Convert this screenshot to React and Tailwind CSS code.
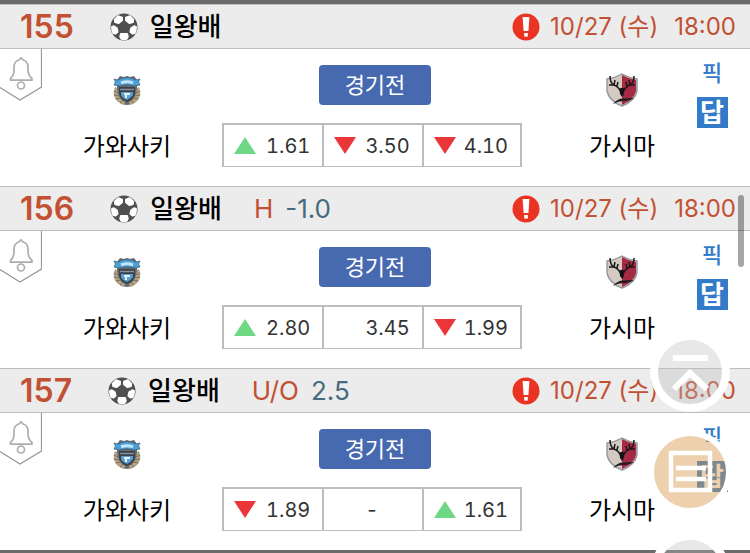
import { clsx } from 'clsx'

const matches = [
  {
    id: 155,
    league: '일왕배',
    home: '가와사키',
    away: '가시마',
    odds: [
      { value: '1.61', trend: 'up' },
      { value: '3.50', trend: 'down' },
      { value: '4.10', trend: 'down' },
    ],
  },
  {
    id: 156,
    league: '일왕배',
    type: 'H',
    line: '-1.0',
    home: '가와사키',
    away: '가시마',
    odds: [
      { value: '2.80', trend: 'up' },
      { value: '3.45' },
      { value: '1.99', trend: 'down' },
    ],
  },
  {
    id: 157,
    league: '일왕배',
    type: 'U/O',
    line: '2.5',
    home: '가와사키',
    away: '가시마',
    odds: [
      { value: '1.89', trend: 'down' },
      { value: '-' },
      { value: '1.61', trend: 'up' },
    ],
  },
]

const SoccerBall = () => (
  <svg viewBox="0 0 28 28" className="size-7 shrink-0" aria-hidden="true">
    <circle cx="14" cy="14" r="13.5" fill="#505050" />
    <g fill="#fff" stroke="#fff" strokeWidth="1.5" strokeLinejoin="round">
      <path d="M8 3 12.200 4.500V7.500L8.500 10.300 5 9.300 4.600 6.500Z" />
      <path d="M20 3 15.800 4.500V7.500L19.500 10.300 23 9.300 23.400 6.500Z" />
      <path d="M1.800 14 3.800 13 7 15.200 7.800 19 5.500 20.800 3.300 20.300Q1.700 17.500 1.800 14Z" />
      <path d="M26.200 14 24.200 13 21 15.200 20.200 19 22.500 20.800 24.700 20.300Q26.300 17.500 26.200 14Z" />
      <path d="M10.800 20.800H17.200L18 23.700 16.800 26Q14 26.800 11.200 26L10 23.700Z" />
    </g>
  </svg>
)

const AlertIcon = () => (
  <svg viewBox="0 0 28 28" className="size-7 shrink-0" aria-hidden="true">
    <circle cx="14" cy="14" r="13.5" fill="#ea3323" />
    <path d="M10.600 4h6.800l-1 14h-4.800Z" fill="#fff" />
    <rect x="12.200" y="20" width="3.600" height="3.600" fill="#fff" />
  </svg>
)

const BellTab = () => (
  <button type="button" aria-label="알림" className="block h-13 w-[42px]">
    <svg viewBox="0 0 42 52" className="block h-13 w-[42px]" fill="none">
      <path d="M41.500 0V38L20 51 0 38.500" stroke="#979797" strokeWidth="1.2" />
      <g stroke="#adadad" strokeWidth="1.7" strokeLinejoin="round">
        <path d="M10.500 31.200H32V29.500C29 27 28 25 28 21V18C28 13.500 25.500 11.500 22.800 10.700L21 8.700 19.200 10.700C16.500 11.500 14 13.500 14 18V21C14 25 13.500 27 10.500 29.500Z" />
        <circle cx="21" cy="36.500" r="3.500" />
      </g>
    </svg>
  </button>
)

const HomeCrest = () => (
  <svg viewBox="0 0 32 32" className="size-8" aria-hidden="true">
    <path d="M6 6 9 2l4 1 3-1 3 1 4-1 3 4v18l-4 6-6 1-6-1-4-6Z" fill="#666a6e" />
    <path d="M4 13Q0 22 7 28L13 31 14 28Q7 25 6 14Z" fill="#b3a283" />
    <path d="M28 13Q32 22 25 28L19 31 18 28Q25 25 26 14Z" fill="#b3a283" />
    <path d="M3 17l4 2M3 21l5 1M5 25l5-1M9 29l3-3M29 17l-4 2M29 21l-5 1M27 25l-5-1M23 29l-3-3" stroke="#6d6350" strokeWidth=".8" />
    <path d="M8 13H24V20Q23 25 16 28 9 25 8 20Z" fill="#38424d" />
    <path d="M10 18H22V21Q20 24 16 26 11 24 10 21Z" fill="#5b9fd0" />
    <path d="M13 19h6v2h-3v3h-2v-3h-1Z" fill="#e8f1f7" />
    <path d="M9 15.500H23" stroke="#8a8f94" strokeWidth="1.5" />
    <path d="M3 5 7 6Q16 1 25 6L29 5 27.500 8 29 11 24 12Q16 9.500 8 12L3 11 4.500 8Z" fill="#4d9fd8" stroke="#42637c" strokeWidth=".8" />
    <path d="M10 8.800Q16 6.500 22 8.800" stroke="#bfe5fb" strokeWidth="3" fill="none" />
  </svg>
)

const AwayCrest = () => (
  <svg viewBox="0 0 34 34" className="size-[34px]" aria-hidden="true">
    <path d="M17 1Q24 5 32 6V18Q30 28 17 33 4 28 2 18V6Q10 5 17 1Z" fill="#d5cac2" stroke="#92979d" strokeWidth="1.4" />
    <path d="M17 2Q24 6 31 7V18Q29 27 17 32Z" fill="#a52b45" />
    <g stroke="#1a1719" fill="none" strokeWidth="1.5">
      <path d="M16 19Q14 14 9 12 5 10 5 3M29 3Q29 10 25 12 20 14 18 19M9 12 10 7M12 13 13 9M25 12 24 7M22 13 21 9M9 12 4 12M25 12 30 12" />
    </g>
    <path d="M14.500 16Q17 13.500 19.500 16L18.500 22 17 24 15 21Z" fill="#151214" />
    <path d="M8 31Q12 26 17 25.500L29 25Q24 28.500 19 28 13 28 8 31Z" fill="#241c20" />
  </svg>
)

const Trend = ({ dir }) => (
  <svg viewBox="0 0 22 17" className="h-[17px] w-[22px]" aria-hidden="true">
    {dir === 'up' ? (
      <path d="M11 0 22 17H0Z" fill="#6fd884" />
    ) : (
      <path d="M0 0H22L11 17Z" fill="#eb3639" />
    )}
  </svg>
)

const Team = ({ crest, name, className }) => (
  <div className={clsx('flex flex-col items-center pt-6', className)}>
    <div className="flex h-[34px] items-center">{crest}</div>
    <span className="mt-[22px] text-2xl leading-9 text-black">{name}</span>
  </div>
)

const OddsTable = ({ odds }) => (
  <table className="h-11 w-full table-fixed border-separate border-spacing-0 border-t-2 border-r border-b border-l border-[#bdbdbd]">
    <tbody>
      <tr>
        {odds.map(({ value, trend }, i) => (
          <td key={i} className={clsx('border-[#bdbdbd] p-0', i === 0 ? 'border-l' : 'border-l-2', i === 2 && 'border-r')}>
            <div
              className={clsx(
                'flex items-center pr-3 pl-2.5 text-xl leading-6 text-[#333] tabular-nums',
                value === '-' ? 'justify-center' : trend ? 'justify-between' : 'justify-end',
              )}
            >
              {trend && <Trend dir={trend} />}
              <span>{value}</span>
            </div>
          </td>
        ))}
      </tr>
    </tbody>
  </table>
)

const Match = ({ match }) => (
  <article>
    <header className="flex h-[45px] items-center border-y border-[#bdbdbd] bg-[#ececec] pr-3.5 pl-5">
      <strong className="text-[32px] leading-9 font-semibold text-[#c25133]">{match.id}</strong>
      <span className="ml-9 flex items-center gap-3">
        <SoccerBall />
        <span className="text-[26px] leading-9 font-medium text-black">{match.league}</span>
      </span>
      {match.type && (
        <span className="ml-8 flex gap-3 text-[26px] leading-9">
          <span className="text-[#c25133]">{match.type}</span>
          <span className="text-[#456b7c]">{match.line}</span>
        </span>
      )}
      <span className="ml-auto flex items-center text-2xl leading-9 text-[#c25133]">
        <AlertIcon />
        <time className="ml-2.5 flex gap-4">
          <span>10/27 (수)</span>
          <span>18:00</span>
        </time>
      </span>
    </header>

    <div className="grid h-[137px] grid-cols-[42px_10fr_300px_9fr_66px]">
      <BellTab />
      <Team crest={<HomeCrest />} name={match.home} className="pr-2.5" />
      <div className="flex flex-col items-center pt-4">
        <button type="button" className="mr-[-6px] mb-[18px] h-10 w-28 rounded bg-[#4769b0] text-[22px] leading-8 text-white">
          경기전
        </button>
        <OddsTable odds={match.odds} />
      </div>
      <Team crest={<AwayCrest />} name={match.away} className="pl-[38px]" />
      <div className="flex flex-col items-center gap-2 pt-2 pr-2.5">
        <a href="#pick" className="text-[22px] leading-8 font-medium text-[#337ac8]">픽</a>
        <a href="#answer" className="flex size-[31px] items-center justify-center bg-[#337ac8] text-[26px] leading-8 font-bold text-white">
          답
        </a>
      </div>
    </div>
  </article>
)

const ScrollButton = ({ label, down }) => (
  <button type="button" aria-label={label} className="size-20 rounded-full border-8 border-white bg-[#bebebe]/35">
    <svg viewBox="0 0 64 64" className={clsx('size-16', down && 'rotate-180')} fill="none" stroke="#fff" strokeWidth="6">
      <path d="M15 18H50M16 49 32 33 49 49" />
    </svg>
  </button>
)

const FloatingMenu = () => (
  <nav className="fixed right-5 -bottom-[59px] z-10 flex flex-col items-center gap-[18px]">
    <ScrollButton label="맨 위로" />
    <button type="button" aria-label="목록" className="-mx-0.5 size-[84px] rounded-full border-6 border-white bg-[#d8994b]/45">
      <svg viewBox="0 0 72 72" className="size-[72px]" fill="none" stroke="#fff" strokeWidth="4.5">
        <path d="M17 17H56V54H17ZM22 32H52M22 43H52" />
      </svg>
    </button>
    <ScrollButton label="맨 아래로" down />
  </nav>
)

export default function App() {
  return (
    <main className="overflow-hidden border-y-4 border-[#6b6b6b] bg-white font-[Inter,'Noto_Sans_CJK_KR',sans-serif]">
      {matches.map((match) => (
        <Match key={match.id} match={match} />
      ))}
      <FloatingMenu />
      <div className="fixed top-[195px] right-1.5 h-[72px] w-1.5 rounded-full bg-black/35" />
    </main>
  )
}
